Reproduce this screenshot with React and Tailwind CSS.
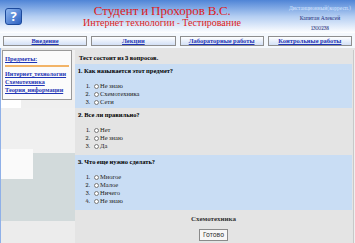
import React from 'react';

const questions = [
  { n: 1, text: 'Как называется этот предмет?', options: ['Не знаю', 'Схемотехника', 'Сети'], bg: 'bg-[#c9ddf4]', pb: 'pb-[2px]' },
  { n: 2, text: 'Все ли правильно?', options: ['Нет', 'Не знаю', 'Да'], bg: 'bg-[#e4e4e4]', pb: 'pb-[5px]' },
  { n: 3, text: 'Что еще нужно сделать?', options: ['Многое', 'Малое', 'Ничего', 'Не знаю'], bg: 'bg-[#c9ddf4]', pb: 'pb-[5px]' },
];

const tabs = ['Введение', 'Лекции', 'Лабораторные работы', 'Контрольные работы'];
const subjects = ['Интернет_технологии', 'Схемотехника', 'Теория_информации'];

export default function App() {
  return (
    <div className="w-[355px] h-[243px] overflow-hidden flex flex-col bg-[#e4e4e4] text-black font-serif [font-family:Liberation_Serif,serif]">
      {/* Header */}
      <header className="h-[33px] shrink-0 flex bg-linear-to-b from-[#4f84d6] via-[#b4cef2] to-white">
        <div className="w-[25px] pl-[5px] pt-[8px]">
          <div className="w-[17px] h-[17px] rounded-[3px] border border-[#1c4a9c] bg-linear-to-br from-[#8fb6ee] to-[#2b5fc0] flex items-center justify-center">
            <span className="text-white font-bold text-[13px] leading-none font-sans">?</span>
          </div>
        </div>
        <div className="flex-1 pl-[12px] text-center text-[#dd1c1c]">
          <div className="text-[13px] leading-[13px] mt-[4px]">Студент и Прохоров В.С.</div>
          <div className="text-[10px] leading-[11px] mt-[1px]">Интернет технологии - Тестирование</div>
        </div>
        <div className="w-[68px] pt-[3px] pr-[2px] text-center text-[5.5px] leading-[10px] whitespace-nowrap">
          <div className="text-[#d6e6ff]">Дистанционный(корресп.)</div>
          <div className="text-[#1b2c7a]">Капитан Алексей</div>
          <div className="text-[#1b2c7a]">1300238</div>
        </div>
      </header>

      {/* Nav */}
      <nav className="h-[15px] shrink-0 flex gap-[4px] px-[3px] pt-[3px] bg-[#f4f8fd]">
        {tabs.map(t => (
          <div
            key={t}
            className="flex-1 h-[10px] border border-[#8e8e8e] bg-linear-to-b from-white to-[#d3e0f6] text-center text-[6.5px] leading-[8px] font-bold text-[#1f35b5] underline"
          >
            {t}
          </div>
        ))}
      </nav>

      {/* Body */}
      <div className="flex-1 flex border-l border-[#8fb0e8] pt-[2px]">
        {/* Sidebar */}
        <aside className="w-[74px] flex flex-col bg-[#f0f0f0]">
          <div className="h-[50px] ml-[1px] mr-[3px] border border-[#9a9a9a] bg-[#fbfbfb] px-[2px] pt-[4px] overflow-hidden">
            <div className="text-[6.5px] leading-[8px] font-bold text-[#1f35b5] underline">Предметы:</div>
            <div className="h-[2px] bg-[#f2b468] mt-[2px] mb-[3px]" />
            {subjects.map(s => (
              <div key={s} className="text-[6.2px] leading-[8px] font-bold text-[#1f35b5] underline whitespace-nowrap">{s}</div>
            ))}
          </div>
          <div className="h-[8px] flex">
            <div className="w-[20px] bg-white" />
            <div className="flex-1 bg-[#efefef]" />
          </div>
          <div className="h-[41px] bg-[#f0f0f0]" />
          <div className="h-[4px] flex">
            <div className="w-[32px] bg-[#fafafa]" />
            <div className="flex-1 bg-[#f0f0f0]" />
          </div>
          <div className="h-[26px] flex">
            <div className="w-[32px] bg-[#fafafa]" />
            <div className="flex-1 bg-[#d2dadb]" />
          </div>
          <div className="h-[42px] bg-[#d2dadb]" />
          <div className="flex-1 bg-[#ececec]" />
        </aside>

        {/* Main */}
        <main className="flex-1 flex flex-col bg-[#e4e4e4] mr-[1px]">
          <div className="h-[14px] pl-[4px] pt-[4px] text-[6.5px] leading-[8px] font-bold">Тест состоит из 3 вопросов.</div>
          {questions.map(q => (
            <section key={q.n} className={`${q.bg} ${q.pb} pt-[3px] pl-[3px]`}>
              <div className="text-[6.5px] leading-[8px] font-bold">{q.n}. {q.text}</div>
              <ol className="mt-[7px]">
                {q.options.map((o, i) => (
                  <li key={o} className="flex items-center h-[8px] text-[6.5px] leading-[8px] text-[#222]">
                    <span className="w-[12px] text-right">{i + 1}.</span>
                    <span className="w-[5px] h-[5px] rounded-full border border-[#7a7a7a] bg-white ml-[4px] mr-[1px]" />
                    <span>{o}</span>
                  </li>
                ))}
              </ol>
            </section>
          ))}
          <div className="flex-1 flex flex-col items-center pt-[5px]">
            <div className="text-[7px] leading-[8px] font-bold text-[#333]">Схемотехника</div>
            <button className="mt-[6px] h-[12px] px-[3px] border border-[#8a8a8a] bg-[#f7f7f7] text-[6.5px] leading-[10px] font-sans text-[#333]">
              Готово
            </button>
          </div>
        </main>
        <div className="w-[2px] bg-[#efefef] border-l border-[#c8c8c8]" />
      </div>
    </div>
  );
}
